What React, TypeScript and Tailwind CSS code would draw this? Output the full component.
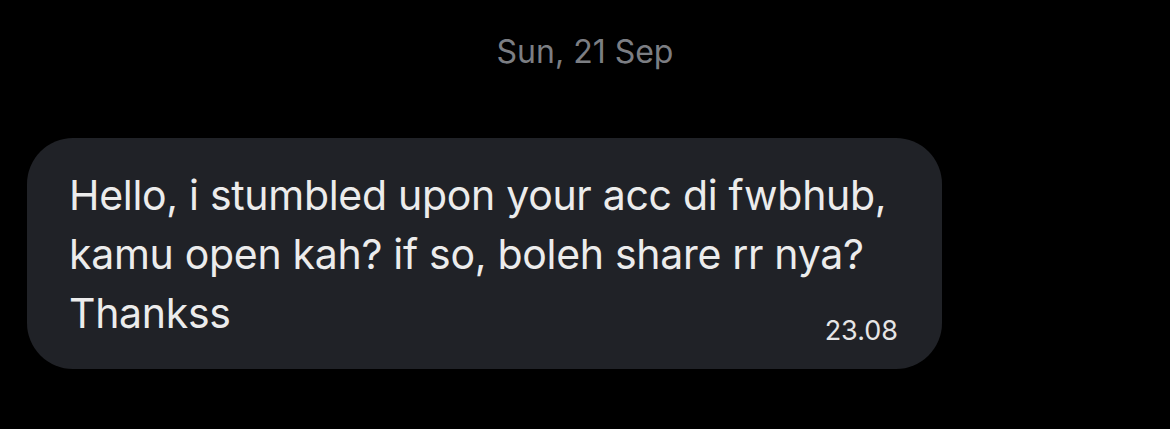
export default function App() {
  return (
    <div
      className="w-full h-[429px] bg-black overflow-hidden"
      style={{ fontFamily: 'Inter, "Liberation Sans", sans-serif' }}
    >
      {/* Date divider */}
      <div className="pt-[32px] text-center text-[32px] leading-[40px] text-[#7c7e83]">
        Sun, 21 Sep
      </div>

      {/* Incoming message bubble */}
      <div className="mt-[66px] ml-[27px] w-[915px] h-[231px] rounded-[46px] bg-[#202227] pl-[42px] pr-[44px] pt-[28px] text-[#ececec]">
        <p className="text-[41px] leading-[59px] tracking-[-0.3px]">
          Hello, i stumbled upon your acc di fwbhub,
          <br />
          kamu open kah? if so, boleh share rr nya?
        </p>
        <div className="flex items-end justify-between">
          <span className="text-[41px] leading-[59px] tracking-[-0.3px]">Thankss</span>
          <span className="text-[27px] leading-[32px] -mb-[4px] text-[#e6e6e6]">23.08</span>
        </div>
      </div>
    </div>
  )
}
